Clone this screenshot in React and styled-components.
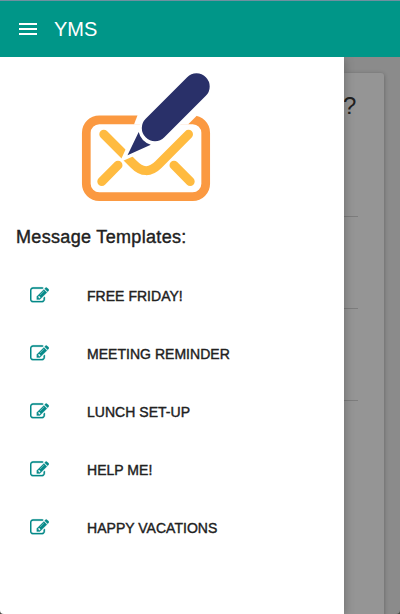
import React from "react";
import styled, { createGlobalStyle } from "styled-components";

const GlobalStyle = createGlobalStyle`
  * { box-sizing: border-box; }
  body { margin: 0; background: #4a4a44; font-family: "Liberation Sans", Arial, sans-serif; color: #212121; }
`;

const Screen = styled.div`
  display: flex;
  flex-direction: column;
  height: 614px;
  overflow: hidden;
  border-radius: 0 0 4px 4px;
  background: #8b8b8b;
`;

const AppBar = styled.header`
  display: flex;
  align-items: center;
  gap: 17px;
  flex: none;
  height: 57px;
  padding: 0 19px 1px;
  border-top: 1px solid #6f90a0;
  background: #009688;
  color: #fff;
`;

const MenuButton = styled.button`
  display: flex;
  padding: 0;
  border: 0;
  background: none;
  color: inherit;
`;

const Brand = styled.span`
  font-size: 20px;
  line-height: 24px;
`;

const Body = styled.div`
  display: flex;
  flex: 1;
  min-height: 0;
`;

const Drawer = styled.aside`
  display: flex;
  flex-direction: column;
  flex: none;
  width: 344px;
  background: #fff;
  box-shadow: 0 2px 10px rgba(0, 0, 0, 0.3);
  z-index: 1;
  clip-path: inset(0 -20px 0 0);
`;

const Logo = styled.svg`
  display: block;
  flex: none;
  width: 150px;
  height: 150px;
  margin: 3px 0 0 70px;
`;

const Heading = styled.h2`
  margin: 15px 0 0 16px;
  font-size: 18px;
  line-height: 24px;
  font-weight: 400;
  letter-spacing: 0.33px;
  -webkit-text-stroke: 0.4px #212121;
`;

const TemplateList = styled.ul`
  display: flex;
  flex-direction: column;
  margin: 18px 0 0;
  padding: 0;
  list-style: none;
`;

const TemplateItem = styled.li`
  display: flex;
  align-items: center;
  gap: 38px;
  height: 58px;
  padding-left: 30px;
`;

const EditIcon = styled.svg`
  flex: none;
  width: 19px;
  height: 19px;
  margin-bottom: 2px;
  fill: #058a89;
  stroke: #058a89;
  stroke-width: 26;
`;

const TemplateName = styled.span`
  font-size: 14px;
  line-height: 20px;
  white-space: nowrap;
  letter-spacing: 0.03px;
  -webkit-text-stroke: 0.4px #212121;
`;

const Backdrop = styled.main`
  flex: 1;
  padding: 16px 16px 0 0;
`;

const Card = styled.section`
  height: 560px;
  padding-top: 18px;
  border-radius: 0 3px 0 0;
  background: #959595;
  box-shadow: 0 1px 4px rgba(0, 0, 0, 0.3);
`;

const Question = styled.div`
  height: 34px;
  margin-left: -1px;
  font-size: 24px;
  line-height: 30px;
`;

const Field = styled.div`
  width: 14px;
  height: 92px;
  border-bottom: 1px solid #7d7d7d;
`;

const templates = ["FREE FRIDAY!", "MEETING REMINDER", "LUNCH SET-UP", "HELP ME!", "HAPPY VACATIONS"];

const PENCIL_SQUARE =
  "M888 1184l116-116-152-152-116 116v56h96v96h56zm440-720q-16-16-33 1l-350 350q-17 17-1 33t33-1l350-350q17-17 1-33zm80 594v190q0 119-84.5 203.5t-203.5 84.5h-832q-119 0-203.5-84.5t-84.5-203.5v-832q0-119 84.5-203.5t203.5-84.5h832q63 0 117 25 15 7 18 23 3 17-9 29l-49 49q-14 14-32 8-23-6-45-6h-832q-66 0-113 47t-47 113v832q0 66 47 113t113 47h832q66 0 113-47t47-113v-126q0-13 9-22l64-64q15-15 35-7t20 29zm-96-738l288 288-672 672h-288v-288zm444 132l-92 92-288-288 92-92q28-28 68-28t68 28l152 152q28 28 28 68t-28 68z";

function EnvelopeLogo() {
  return (
    <Logo viewBox="0 0 150 150" aria-label="Message logo">
      <rect x="16.3" y="59.8" width="119.4" height="76.9" rx="13" fill="none" stroke="#fb9941" strokeWidth="8.7" />
      <path d="M68 54L64 64.5H118L127 55.5L121 50Z" fill="#fff" />
      <g fill="none" stroke="#ffbb40" strokeWidth="9" strokeLinecap="round" strokeLinejoin="round">
        <path d="M33.8 74.3L63.5 104Q76 117 88.5 104.5L118.5 74.3" />
        <path d="M31.8 121.5L48 105.2" />
        <path d="M104 105.2L120.2 121.5" />
      </g>
      <path d="M50.5 100.5L55.7 89.3L65 66L90 84L82 91L62.3 96.7L51.5 101.5Z" fill="#fff" />
      <path d="M126.5 26.5L85 68" stroke="#fff" strokeWidth="31" strokeLinecap="round" />
      <path d="M126.5 26.5L85 68" stroke="#293069" strokeWidth="26.4" strokeLinecap="round" />
      <path d="M68.7 72Q71 81.5 80.8 84.8L57.5 95.3Z" fill="#293069" />
    </Logo>
  );
}

export default function App() {
  return (
    <>
      <GlobalStyle />
      <Screen>
        <AppBar>
          <MenuButton aria-label="Menu">
            <svg width="18" height="12" viewBox="0 0 18 12" fill="currentColor">
              <path d="M0 0h18v2H0zM0 5h18v2H0zM0 10h18v2H0z" />
            </svg>
          </MenuButton>
          <Brand>YMS</Brand>
        </AppBar>
        <Body>
          <Drawer>
            <EnvelopeLogo />
            <Heading>Message Templates:</Heading>
            <TemplateList>
              {templates.map((name) => (
                <TemplateItem key={name}>
                  <EditIcon viewBox="0 0 1792 1792">
                    <path d={PENCIL_SQUARE} />
                  </EditIcon>
                  <TemplateName>{name}</TemplateName>
                </TemplateItem>
              ))}
            </TemplateList>
          </Drawer>
          <Backdrop>
            <Card>
              <Question>?</Question>
              <Field />
              <Field />
              <Field />
            </Card>
          </Backdrop>
        </Body>
      </Screen>
    </>
  );
}
